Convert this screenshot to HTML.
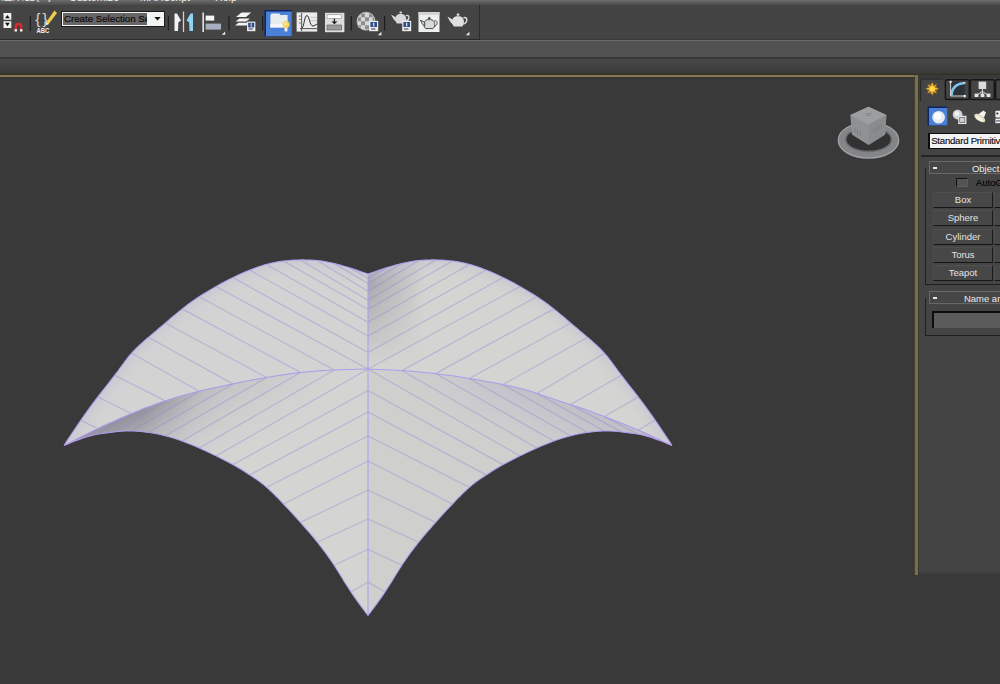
<!DOCTYPE html>
<html lang="en">
<head>
<meta charset="utf-8">
<title>3ds Max viewport</title>
<style>
html,body{margin:0;padding:0;}
body{width:1000px;height:684px;overflow:hidden;background:#393939;position:relative;font-family:"Liberation Sans","Noto Sans CJK SC",sans-serif;font-size:9.5px;color:#e0e0e0;}
.abs{position:absolute;}
#topstrip{left:0;top:0;width:1000px;height:6px;background:linear-gradient(#6e6e6e,#585858 50%,#444 100%);}
#tbrow{left:0;top:6px;width:1000px;height:33px;background:#434343;}
#toolbar{left:0;top:5px;width:479px;height:34px;background:#444;border-right:1.5px solid #2c2c2c;border-bottom:1.5px solid #2a2a2a;box-sizing:content-box;}
#band1{left:0;top:40px;width:1000px;height:18px;background:#515151;border-top:1px solid #686868;box-sizing:border-box;}
#band2{left:0;top:57px;width:1000px;height:18px;background:linear-gradient(#363636 0,#363636 8%,#484848 12%,#3c3c3c 85%,#33301f 100%);}
#yh{left:0;top:75.2px;width:918px;height:2.3px;background:#84764e;}
#yhs{left:0;top:77.5px;width:916px;height:1.5px;background:#36332d;}
#yv{left:915.4px;top:75px;width:2.6px;height:500px;background:#7c6f46;box-shadow:-0.6px 0 0 #4a4430;}
#menu{left:0;top:-9.3px;height:12px;line-height:12px;font-size:10.6px;color:#f2f2f2;white-space:nowrap;letter-spacing:0;}
#menu span{position:absolute;top:0;}
#panel{left:919px;top:78px;width:81px;height:495px;background:#444444;overflow:hidden;}
#panelfade{left:919px;top:571px;width:81px;height:4px;background:linear-gradient(#444,#393939);}
.btn{position:absolute;left:14px;width:60px;height:16px;box-sizing:border-box;background:#474747;border-top:1px solid #505050;border-left:1px solid #4c4c4c;border-right:1.5px solid #1c1c1c;border-bottom:1.5px solid #161616;text-align:center;line-height:14.3px;font-size:9.5px;color:#e4e4e4;}
.roll{position:absolute;left:9.5px;width:80px;height:13px;box-sizing:border-box;border:1px solid #686868;background:#464646;font-size:9.5px;line-height:11px;color:#ececec;white-space:nowrap;}
.roll i{position:absolute;left:3px;top:5px;width:4.5px;height:1.5px;background:#e8e8e8;}
.frame{position:absolute;left:6px;width:90px;box-sizing:border-box;border-left:1.5px solid #1e1e1e;border-bottom:1.5px solid #1e1e1e;}
</style>
</head>
<body>
<div class="abs" id="tbrow"></div>
<div class="abs" id="topstrip"></div>
<div class="abs" id="toolbar"></div>
<div class="abs" id="menu"><span style="left:1px;font-size:11.5px;top:-1px">渲染器(R)</span><span style="left:69px">Customize</span><span style="left:140px">MAXScript</span><span style="left:215px">Help</span></div>
<div class="abs" id="band1"></div>
<div class="abs" id="band2"></div>
<div class="abs" id="yh"></div>
<div class="abs" id="yhs"></div>
<div class="abs" id="yv"></div>
<div class="abs" style="left:60.5px;top:10.5px;width:104px;height:16.5px;background:#1a1a1a;"></div>
<div class="abs" style="left:62px;top:11.5px;width:101.5px;height:14.5px;background:#f4f4f4;"></div>
<div class="abs" style="left:63px;top:13px;width:84px;height:11.5px;background:#666666;overflow:hidden;white-space:nowrap;font-size:9.7px;line-height:12.3px;color:#0c0c0c;-webkit-text-stroke:0.2px #0c0c0c;"><span style="margin-left:1px">Create Selection Se</span></div>
<svg class="abs" width="1000" height="45" viewBox="0 0 1000 45" style="left:0;top:0">
<!-- combo arrow -->
<path d="M154.3 17 L160.7 17 L157.5 20.6Z" fill="#111"/>
<!-- spinner -->
<rect x="3.5" y="13" width="7.8" height="6.8" fill="#f0f0f0"/>
<rect x="3.5" y="21.2" width="7.8" height="6.8" fill="#f0f0f0"/>
<path d="M5 18.2 L9.8 18.2 L7.4 15Z" fill="#111"/>
<path d="M5 22.8 L9.8 22.8 L7.4 26.2Z" fill="#111"/>
<!-- magnet -->
<path d="M15.8 31 L15.8 26.5 A2.7 2.7 0 0 1 21.2 26.5 L21.2 31" fill="none" stroke="#e0262c" stroke-width="2.3"/>
<rect x="14.6" y="29.2" width="2.4" height="2.3" fill="#f4f4f4"/>
<rect x="20" y="29.2" width="2.4" height="2.3" fill="#f4f4f4"/>
<!-- separators -->
<g stroke="#1d1d1d" stroke-width="1.2">
<path d="M30.3 16 V31"/><path d="M168.4 16 V30.5"/><path d="M229 16 V30.5"/><path d="M262.6 16 V30.5"/><path d="M351.3 16 V30.5"/><path d="M384.6 16 V30.5"/>
</g>
<!-- braces + pencil + ABC -->
<text x="35.2" y="23.8" font-family="Liberation Sans, sans-serif" font-size="15.5" fill="#d6d6d6">{</text><text x="42.4" y="23.8" font-family="Liberation Sans, sans-serif" font-size="15.5" fill="#d6d6d6">}</text>
<path d="M54.4 10.6 L57 13 L48.6 24.2 L46 25 L46.2 22.2Z" fill="#f1cb4c"/>
<path d="M48.8 24 L46 25 L46.2 22.2Z" fill="#f4f4f4"/>
<text x="36.6" y="32.6" font-family="Liberation Sans, sans-serif" font-size="6.4" font-weight="bold" fill="#f2f2f2" textLength="12.8" lengthAdjust="spacingAndGlyphs">ABC</text>
<!-- mirror -->
<path d="M174.5 13.4 L177 13.4 L181 20.6 L178.4 22.3 L178 31 L174.5 31Z" fill="#f3f3f6"/>
<path d="M183.5 11.5 V32" stroke="#d8d2c4" stroke-width="1.3"/>
<path d="M193 13.4 L190.5 13.4 L186.5 20.6 L189.1 22.3 L189.5 31 L193 31Z" fill="#8fd3f0"/>
<!-- align -->
<path d="M203.2 12.5 V32" stroke="#e4e4e4" stroke-width="1.6"/>
<rect x="205.6" y="15.6" width="8.6" height="5" fill="#f4f4f4"/>
<rect x="205.6" y="23.6" width="15.4" height="6" fill="#a9aec0"/>
<path d="M225.2 31.4 L225.2 34.8 L221.8 34.8Z" fill="#f4f4f4"/>
<!-- layers -->
<path d="M241.5 12.6 L251.2 12.6 L246 17 L236 17Z" fill="#f4f4f4"/>
<path d="M239.5 18.4 L250 18.4 L246 21.4 L235.5 21.4Z" fill="#f4f4f4"/>
<path d="M238.5 22.8 L248 22.8 L246.5 25.6 L235 25.6Z" fill="#f4f4f4"/>
<rect x="247" y="21.6" width="8.4" height="9.6" fill="#e8e8ee"/>
<rect x="248.2" y="22.8" width="6" height="4.6" fill="#2a4c86"/>
<rect x="250.6" y="23.2" width="1.2" height="3.6" fill="#c8d4ea"/>
<rect x="248.6" y="28.4" width="4" height="1.2" fill="#556"/>
<!-- active blue button -->
<rect x="264.5" y="10" width="27.3" height="26.2" fill="#0d2466"/>
<rect x="266" y="11.5" width="25.8" height="24.7" fill="#4b80d8"/>
<path d="M270.4 15 L271.6 13.6 L279.4 13.6 L280.2 15 L287.6 15 L287.6 27.4 L270.4 27.4Z" fill="#e9ecec"/>
<path d="M270.4 24 H287.6 V27.4 H270.4Z" fill="#f8f8f8"/>
<rect x="284.6" y="28" width="2.8" height="3.4" fill="#f2f2f2"/>
<circle cx="286" cy="24.6" r="3.5" fill="#f6d660"/>
<circle cx="285.4" cy="24" r="1.6" fill="#fbe88f"/>
<!-- curve editor -->
<rect x="296.6" y="12.4" width="20.6" height="19.2" fill="#ebebeb"/>
<path d="M301.6 13 V31 M300 28.6 H317" stroke="#444" stroke-width="0.9" fill="none"/>
<path d="M299 16 h1.6 M299 19.5 h1.6 M299 23 h1.6" stroke="#444" stroke-width="0.8"/>
<path d="M302 28 C304 27 304.5 15.5 306.8 15.5 C309.4 15.5 309.6 26 313 26 C314.6 26 315.6 24.6 317 24" stroke="#2a2a2a" stroke-width="1" fill="none"/>
<path d="M310 17.4 H317 M310 20.6 H317" stroke="#bbb" stroke-width="0.7"/>
<!-- dope sheet -->
<rect x="325" y="12.8" width="19.4" height="19.4" fill="#dedede"/>
<rect x="327" y="14.8" width="14.6" height="3.6" fill="#fdfdfd" stroke="#777" stroke-width="0.5"/>
<path d="M334.4 18.6 V22" stroke="#222" stroke-width="1.3"/>
<path d="M331.4 21.4 H337.4 L334.4 24.2Z" fill="#1c1c1c"/>
<rect x="327" y="25" width="14.6" height="5" fill="#9a9a9a" stroke="#555" stroke-width="0.6"/>
<!-- material editor -->
<circle cx="366" cy="21.2" r="9" fill="#d8d8d8"/>
<g fill="#8e8e8e"><path d="M361 13.6 h4 v3.6 h-4z M369 13.8 h3.6 v3.4 h-3.6z M357.6 17.2 h3.4 v4 h-3.4z M365 17.2 h4 v4 h-4z M361 21.2 h4 v4 h-4z M357.8 25.2 h3.2 v2.6 h-3.2z M365 25.2 h4 v4.4 h-4z M372.6 17.2 h2 v4 h-2z"/></g>
<circle cx="366" cy="21.2" r="9" fill="none" stroke="#bdbdbd" stroke-width="0.8"/>
<rect x="369.2" y="20.8" width="9" height="10.4" fill="#ececf0"/>
<rect x="370.4" y="22" width="6.6" height="5" fill="#2b4f88"/>
<rect x="373" y="22.6" width="1.3" height="3.8" fill="#cfd9ec"/>
<rect x="371" y="28.4" width="4.4" height="1.2" fill="#556"/>
<path d="M381.4 31.8 L381.4 35.2 L378 35.2Z" fill="#f4f4f4"/>
<!-- render setup teapot -->
<g fill="#d9d9dc">
<path d="M396.6 15.6 C396.6 13.4 404.8 13.4 404.8 15.6 C406.8 17.6 406.6 21.6 404.6 23.4 L397 23.4 C395 21.6 394.6 17.6 396.6 15.6Z"/>
<path d="M391 14.4 L395.8 17.2 L396.2 21.6 C393.8 20.6 392.8 17.4 391 14.4Z"/>
<rect x="399.4" y="11.6" width="2.6" height="2" rx="0.8"/>
</g>
<path d="M405.8 15.6 C410 14 410 20 405.6 21.4" fill="none" stroke="#d9d9dc" stroke-width="1.3"/>
<rect x="402.2" y="20.8" width="9" height="10.4" fill="#ececf0"/>
<rect x="403.4" y="22" width="6.6" height="5" fill="#2b4f88"/>
<rect x="406" y="22.6" width="1.3" height="3.8" fill="#cfd9ec"/>
<rect x="404" y="28.4" width="4.4" height="1.2" fill="#556"/>
<!-- rendered frame window -->
<rect x="418.5" y="12" width="21" height="20" fill="#eef0f0"/>
<rect x="418.5" y="12" width="21" height="3" fill="#d4d4d4"/>
<g fill="#d8d9da" stroke="#3a3a3a" stroke-width="0.9">
<path d="M425.4 20.8 C425.4 19.2 433.2 19.2 433.2 20.8 C435.4 22.6 435.2 26.6 433 28.6 L425.6 28.6 C423.4 26.6 423.2 22.6 425.4 20.8Z"/>
<path d="M420.4 20.2 L424.6 22.2 L424.8 26.2 C422.4 25.2 421.8 22.6 420.4 20.2Z"/>
</g>
<path d="M434.2 21 C438.2 19.6 438.2 25.4 434 26.6" fill="none" stroke="#3a3a3a" stroke-width="0.9"/>
<rect x="428" y="17.2" width="2.6" height="1.8" rx="0.8" fill="#333"/>
<!-- render teapot -->
<g fill="#e0e0e3">
<path d="M453.6 17.8 C453.6 15.6 462.4 15.6 462.4 17.8 C464.6 19.8 464.4 24.4 462.2 26.6 L454 26.6 C451.8 24.4 451.4 19.8 453.6 17.8Z"/>
<path d="M447.4 16.6 L452.6 19.4 L453 24.4 C450.4 23.2 449.4 19.8 447.4 16.6Z"/>
<rect x="456.6" y="13.6" width="2.8" height="2.2" rx="0.8"/>
</g>
<path d="M463.4 17.8 C468 16 468 22.6 463.2 24.2" fill="none" stroke="#e0e0e3" stroke-width="1.4"/>
<path d="M469.4 31.8 L469.4 35.2 L466 35.2Z" fill="#f4f4f4"/>
</svg>


<svg id="vault" width="1000" height="684" viewBox="0 0 1000 684" style="position:absolute;left:0;top:0">
<defs>
<linearGradient id="gfl" gradientUnits="userSpaceOnUse" x1="170" y1="398" x2="200" y2="468">
<stop offset="0" stop-color="#94929c"/><stop offset="0.3" stop-color="#afaeb5"/><stop offset="0.65" stop-color="#c7c6ca"/><stop offset="1" stop-color="#d4d4d3"/>
</linearGradient>
<linearGradient id="gfr" gradientUnits="userSpaceOnUse" x1="566" y1="398" x2="542" y2="454">
<stop offset="0" stop-color="#c0bec6"/><stop offset="0.5" stop-color="#c9c8cd"/><stop offset="1" stop-color="#cfcfce"/>
</linearGradient>
<linearGradient id="gbr" gradientUnits="userSpaceOnUse" x1="368" y1="0" x2="425" y2="0">
<stop offset="0" stop-color="#a9a8ae"/><stop offset="1" stop-color="#d4d4d2"/>
</linearGradient>
<linearGradient id="gfade_l" gradientUnits="userSpaceOnUse" x1="142" y1="0" x2="342" y2="0">
<stop offset="0" stop-color="#d4d4d3" stop-opacity="0"/><stop offset="0.14" stop-color="#d4d4d3" stop-opacity="0.25"/><stop offset="0.28" stop-color="#d4d4d3" stop-opacity="0.55"/><stop offset="0.42" stop-color="#d4d4d3" stop-opacity="0.7"/><stop offset="0.8" stop-color="#d4d4d3" stop-opacity="0.85"/><stop offset="1" stop-color="#d4d4d3" stop-opacity="1"/>
</linearGradient>
<linearGradient id="gfade_r" gradientUnits="userSpaceOnUse" x1="486" y1="0" x2="386" y2="0">
<stop offset="0" stop-color="#cfcfce" stop-opacity="0"/><stop offset="1" stop-color="#cfcfce" stop-opacity="1"/>
</linearGradient>
<linearGradient id="gfade_br" gradientUnits="userSpaceOnUse" x1="0" y1="285" x2="0" y2="365">
<stop offset="0" stop-color="#d4d4d2" stop-opacity="0"/><stop offset="1" stop-color="#d4d4d2" stop-opacity="1"/>
</linearGradient>
<filter id="rim" x="-5%" y="-5%" width="110%" height="110%"><feGaussianBlur stdDeviation="5"/></filter>
<filter id="lb" x="-5%" y="-5%" width="110%" height="110%"><feGaussianBlur stdDeviation="0.5"/></filter>
<clipPath id="cbl"><path d="M64.0 445.5 L67.8 439.6 L71.7 433.8 L75.5 428.1 L79.4 422.4 L83.2 416.8 L87.1 411.4 L90.9 406.1 L94.8 400.9 L98.6 395.9 L102.5 390.9 L106.3 386.1 L110.2 381.1 L114.0 376.1 L117.9 371.0 L121.7 365.7 L125.6 360.5 L129.4 355.7 L133.3 351.3 L137.1 347.4 L141.0 343.8 L144.8 340.4 L148.7 337.1 L152.5 333.9 L156.4 330.6 L160.2 327.3 L164.1 324.1 L167.9 320.8 L171.7 317.5 L175.6 314.3 L179.4 311.2 L183.3 308.1 L187.1 305.1 L191.0 302.3 L194.8 299.6 L198.7 297.0 L202.5 294.5 L206.4 292.2 L210.2 289.9 L214.1 287.6 L217.9 285.4 L221.8 283.3 L225.6 281.3 L229.5 279.3 L233.3 277.4 L237.2 275.5 L241.0 273.8 L244.9 272.1 L248.7 270.5 L252.6 269.0 L256.4 267.6 L260.3 266.3 L264.1 265.1 L267.9 264.0 L271.8 263.1 L275.6 262.3 L279.5 261.6 L283.3 261.1 L287.2 260.7 L291.0 260.3 L294.9 260.1 L298.7 259.9 L302.6 259.8 L306.4 259.9 L310.3 260.0 L314.1 260.3 L318.0 260.6 L321.8 261.1 L325.7 261.7 L329.5 262.4 L333.4 263.2 L337.2 264.2 L341.1 265.3 L344.9 266.4 L348.8 267.6 L352.6 268.8 L356.5 270.1 L360.3 271.4 L364.2 272.7 L368.0 274.0 L368.0 369.0 L368.0 369.0 L362.8 369.1 L357.7 369.2 L352.5 369.4 L347.4 369.5 L342.2 369.7 L337.1 369.9 L331.9 370.1 L326.8 370.4 L321.6 370.7 L316.5 371.0 L311.3 371.4 L306.2 371.9 L301.0 372.4 L295.9 373.0 L290.7 373.7 L285.6 374.4 L280.4 375.2 L275.3 376.1 L270.1 376.9 L264.9 377.8 L259.8 378.7 L254.6 379.6 L249.5 380.6 L244.3 381.6 L239.2 382.6 L234.0 383.7 L228.9 384.7 L223.7 385.8 L218.6 386.9 L213.4 388.0 L208.3 389.1 L203.1 390.3 L198.0 391.5 L192.8 392.8 L187.7 394.2 L182.5 395.6 L177.4 397.1 L172.2 398.7 L167.1 400.3 L161.9 402.0 L156.7 403.8 L151.6 405.7 L146.4 407.6 L141.3 409.6 L136.1 411.7 L131.0 413.8 L125.8 415.9 L120.7 418.1 L115.5 420.4 L110.4 422.7 L105.2 425.1 L100.1 427.5 L94.9 429.9 L89.8 432.5 L84.6 435.0 L79.5 437.6 L74.3 440.2 L69.2 442.9 L64.0 445.5Z"/></clipPath>
<clipPath id="cbr"><path d="M672.0 445.5 L668.2 439.6 L664.3 433.8 L660.5 428.1 L656.6 422.4 L652.8 416.8 L648.9 411.4 L645.1 406.1 L641.2 400.9 L637.4 395.9 L633.5 390.9 L629.7 386.1 L625.8 381.1 L622.0 376.1 L618.1 371.0 L614.3 365.7 L610.4 360.5 L606.6 355.7 L602.7 351.3 L598.9 347.4 L595.0 343.8 L591.2 340.4 L587.3 337.1 L583.5 333.9 L579.6 330.6 L575.8 327.3 L571.9 324.1 L568.1 320.8 L564.3 317.5 L560.4 314.3 L556.6 311.2 L552.7 308.1 L548.9 305.1 L545.0 302.3 L541.2 299.6 L537.3 297.0 L533.5 294.5 L529.6 292.2 L525.8 289.9 L521.9 287.6 L518.1 285.4 L514.2 283.3 L510.4 281.3 L506.5 279.3 L502.7 277.4 L498.8 275.5 L495.0 273.8 L491.1 272.1 L487.3 270.5 L483.4 269.0 L479.6 267.6 L475.7 266.3 L471.9 265.1 L468.1 264.0 L464.2 263.1 L460.4 262.3 L456.5 261.6 L452.7 261.1 L448.8 260.7 L445.0 260.3 L441.1 260.1 L437.3 259.9 L433.4 259.8 L429.6 259.9 L425.7 260.0 L421.9 260.3 L418.0 260.6 L414.2 261.1 L410.3 261.7 L406.5 262.4 L402.6 263.2 L398.8 264.2 L394.9 265.3 L391.1 266.4 L387.2 267.6 L383.4 268.8 L379.5 270.1 L375.7 271.4 L371.8 272.7 L368.0 274.0 L368.0 369.0 L368.0 369.0 L373.2 369.2 L378.3 369.4 L383.5 369.6 L388.6 369.9 L393.8 370.1 L398.9 370.4 L404.1 370.8 L409.2 371.1 L414.4 371.5 L419.5 372.0 L424.7 372.4 L429.8 373.0 L435.0 373.6 L440.1 374.2 L445.3 374.9 L450.4 375.6 L455.6 376.3 L460.7 377.1 L465.9 377.9 L471.1 378.7 L476.2 379.6 L481.4 380.5 L486.5 381.4 L491.7 382.3 L496.8 383.3 L502.0 384.3 L507.1 385.4 L512.3 386.5 L517.4 387.8 L522.6 389.1 L527.7 390.5 L532.9 392.1 L538.0 393.7 L543.2 395.5 L548.3 397.2 L553.5 399.0 L558.6 400.7 L563.8 402.4 L568.9 404.1 L574.1 405.7 L579.3 407.4 L584.4 409.1 L589.6 411.0 L594.7 412.9 L599.9 414.9 L605.0 416.8 L610.2 418.8 L615.3 420.8 L620.5 422.8 L625.6 424.8 L630.8 426.9 L635.9 429.0 L641.1 431.2 L646.2 433.5 L651.4 435.8 L656.5 438.2 L661.7 440.6 L666.8 443.1 L672.0 445.5Z"/></clipPath>
</defs>
<path d="M64.0 445.5 L67.8 439.6 L71.7 433.8 L75.5 428.1 L79.4 422.4 L83.2 416.8 L87.1 411.4 L90.9 406.1 L94.8 400.9 L98.6 395.9 L102.5 390.9 L106.3 386.1 L110.2 381.1 L114.0 376.1 L117.9 371.0 L121.7 365.7 L125.6 360.5 L129.4 355.7 L133.3 351.3 L137.1 347.4 L141.0 343.8 L144.8 340.4 L148.7 337.1 L152.5 333.9 L156.4 330.6 L160.2 327.3 L164.1 324.1 L167.9 320.8 L171.7 317.5 L175.6 314.3 L179.4 311.2 L183.3 308.1 L187.1 305.1 L191.0 302.3 L194.8 299.6 L198.7 297.0 L202.5 294.5 L206.4 292.2 L210.2 289.9 L214.1 287.6 L217.9 285.4 L221.8 283.3 L225.6 281.3 L229.5 279.3 L233.3 277.4 L237.2 275.5 L241.0 273.8 L244.9 272.1 L248.7 270.5 L252.6 269.0 L256.4 267.6 L260.3 266.3 L264.1 265.1 L267.9 264.0 L271.8 263.1 L275.6 262.3 L279.5 261.6 L283.3 261.1 L287.2 260.7 L291.0 260.3 L294.9 260.1 L298.7 259.9 L302.6 259.8 L306.4 259.9 L310.3 260.0 L314.1 260.3 L318.0 260.6 L321.8 261.1 L325.7 261.7 L329.5 262.4 L333.4 263.2 L337.2 264.2 L341.1 265.3 L344.9 266.4 L348.8 267.6 L352.6 268.8 L356.5 270.1 L360.3 271.4 L364.2 272.7 L368.0 274.0 L368.0 369.0 L368.0 369.0 L362.8 369.1 L357.7 369.2 L352.5 369.4 L347.4 369.5 L342.2 369.7 L337.1 369.9 L331.9 370.1 L326.8 370.4 L321.6 370.7 L316.5 371.0 L311.3 371.4 L306.2 371.9 L301.0 372.4 L295.9 373.0 L290.7 373.7 L285.6 374.4 L280.4 375.2 L275.3 376.1 L270.1 376.9 L264.9 377.8 L259.8 378.7 L254.6 379.6 L249.5 380.6 L244.3 381.6 L239.2 382.6 L234.0 383.7 L228.9 384.7 L223.7 385.8 L218.6 386.9 L213.4 388.0 L208.3 389.1 L203.1 390.3 L198.0 391.5 L192.8 392.8 L187.7 394.2 L182.5 395.6 L177.4 397.1 L172.2 398.7 L167.1 400.3 L161.9 402.0 L156.7 403.8 L151.6 405.7 L146.4 407.6 L141.3 409.6 L136.1 411.7 L131.0 413.8 L125.8 415.9 L120.7 418.1 L115.5 420.4 L110.4 422.7 L105.2 425.1 L100.1 427.5 L94.9 429.9 L89.8 432.5 L84.6 435.0 L79.5 437.6 L74.3 440.2 L69.2 442.9 L64.0 445.5Z" fill="#d3d3d4"/>
<path d="M672.0 445.5 L668.2 439.6 L664.3 433.8 L660.5 428.1 L656.6 422.4 L652.8 416.8 L648.9 411.4 L645.1 406.1 L641.2 400.9 L637.4 395.9 L633.5 390.9 L629.7 386.1 L625.8 381.1 L622.0 376.1 L618.1 371.0 L614.3 365.7 L610.4 360.5 L606.6 355.7 L602.7 351.3 L598.9 347.4 L595.0 343.8 L591.2 340.4 L587.3 337.1 L583.5 333.9 L579.6 330.6 L575.8 327.3 L571.9 324.1 L568.1 320.8 L564.3 317.5 L560.4 314.3 L556.6 311.2 L552.7 308.1 L548.9 305.1 L545.0 302.3 L541.2 299.6 L537.3 297.0 L533.5 294.5 L529.6 292.2 L525.8 289.9 L521.9 287.6 L518.1 285.4 L514.2 283.3 L510.4 281.3 L506.5 279.3 L502.7 277.4 L498.8 275.5 L495.0 273.8 L491.1 272.1 L487.3 270.5 L483.4 269.0 L479.6 267.6 L475.7 266.3 L471.9 265.1 L468.1 264.0 L464.2 263.1 L460.4 262.3 L456.5 261.6 L452.7 261.1 L448.8 260.7 L445.0 260.3 L441.1 260.1 L437.3 259.9 L433.4 259.8 L429.6 259.9 L425.7 260.0 L421.9 260.3 L418.0 260.6 L414.2 261.1 L410.3 261.7 L406.5 262.4 L402.6 263.2 L398.8 264.2 L394.9 265.3 L391.1 266.4 L387.2 267.6 L383.4 268.8 L379.5 270.1 L375.7 271.4 L371.8 272.7 L368.0 274.0 L368.0 369.0 L368.0 369.0 L373.2 369.2 L378.3 369.4 L383.5 369.6 L388.6 369.9 L393.8 370.1 L398.9 370.4 L404.1 370.8 L409.2 371.1 L414.4 371.5 L419.5 372.0 L424.7 372.4 L429.8 373.0 L435.0 373.6 L440.1 374.2 L445.3 374.9 L450.4 375.6 L455.6 376.3 L460.7 377.1 L465.9 377.9 L471.1 378.7 L476.2 379.6 L481.4 380.5 L486.5 381.4 L491.7 382.3 L496.8 383.3 L502.0 384.3 L507.1 385.4 L512.3 386.5 L517.4 387.8 L522.6 389.1 L527.7 390.5 L532.9 392.1 L538.0 393.7 L543.2 395.5 L548.3 397.2 L553.5 399.0 L558.6 400.7 L563.8 402.4 L568.9 404.1 L574.1 405.7 L579.3 407.4 L584.4 409.1 L589.6 411.0 L594.7 412.9 L599.9 414.9 L605.0 416.8 L610.2 418.8 L615.3 420.8 L620.5 422.8 L625.6 424.8 L630.8 426.9 L635.9 429.0 L641.1 431.2 L646.2 433.5 L651.4 435.8 L656.5 438.2 L661.7 440.6 L666.8 443.1 L672.0 445.5Z" fill="url(#gbr)"/>
<path d="M672.0 445.5 L668.2 439.6 L664.3 433.8 L660.5 428.1 L656.6 422.4 L652.8 416.8 L648.9 411.4 L645.1 406.1 L641.2 400.9 L637.4 395.9 L633.5 390.9 L629.7 386.1 L625.8 381.1 L622.0 376.1 L618.1 371.0 L614.3 365.7 L610.4 360.5 L606.6 355.7 L602.7 351.3 L598.9 347.4 L595.0 343.8 L591.2 340.4 L587.3 337.1 L583.5 333.9 L579.6 330.6 L575.8 327.3 L571.9 324.1 L568.1 320.8 L564.3 317.5 L560.4 314.3 L556.6 311.2 L552.7 308.1 L548.9 305.1 L545.0 302.3 L541.2 299.6 L537.3 297.0 L533.5 294.5 L529.6 292.2 L525.8 289.9 L521.9 287.6 L518.1 285.4 L514.2 283.3 L510.4 281.3 L506.5 279.3 L502.7 277.4 L498.8 275.5 L495.0 273.8 L491.1 272.1 L487.3 270.5 L483.4 269.0 L479.6 267.6 L475.7 266.3 L471.9 265.1 L468.1 264.0 L464.2 263.1 L460.4 262.3 L456.5 261.6 L452.7 261.1 L448.8 260.7 L445.0 260.3 L441.1 260.1 L437.3 259.9 L433.4 259.8 L429.6 259.9 L425.7 260.0 L421.9 260.3 L418.0 260.6 L414.2 261.1 L410.3 261.7 L406.5 262.4 L402.6 263.2 L398.8 264.2 L394.9 265.3 L391.1 266.4 L387.2 267.6 L383.4 268.8 L379.5 270.1 L375.7 271.4 L371.8 272.7 L368.0 274.0 L368.0 369.0 L368.0 369.0 L373.2 369.2 L378.3 369.4 L383.5 369.6 L388.6 369.9 L393.8 370.1 L398.9 370.4 L404.1 370.8 L409.2 371.1 L414.4 371.5 L419.5 372.0 L424.7 372.4 L429.8 373.0 L435.0 373.6 L440.1 374.2 L445.3 374.9 L450.4 375.6 L455.6 376.3 L460.7 377.1 L465.9 377.9 L471.1 378.7 L476.2 379.6 L481.4 380.5 L486.5 381.4 L491.7 382.3 L496.8 383.3 L502.0 384.3 L507.1 385.4 L512.3 386.5 L517.4 387.8 L522.6 389.1 L527.7 390.5 L532.9 392.1 L538.0 393.7 L543.2 395.5 L548.3 397.2 L553.5 399.0 L558.6 400.7 L563.8 402.4 L568.9 404.1 L574.1 405.7 L579.3 407.4 L584.4 409.1 L589.6 411.0 L594.7 412.9 L599.9 414.9 L605.0 416.8 L610.2 418.8 L615.3 420.8 L620.5 422.8 L625.6 424.8 L630.8 426.9 L635.9 429.0 L641.1 431.2 L646.2 433.5 L651.4 435.8 L656.5 438.2 L661.7 440.6 L666.8 443.1 L672.0 445.5Z" fill="url(#gfade_br)"/>
<g clip-path="url(#cbl)"><path d="M64.0 445.5 L67.8 439.6 L71.7 433.8 L75.5 428.1 L79.4 422.4 L83.2 416.8 L87.1 411.4 L90.9 406.1 L94.8 400.9 L98.6 395.9 L102.5 390.9 L106.3 386.1 L110.2 381.1 L114.0 376.1 L117.9 371.0 L121.7 365.7 L125.6 360.5 L129.4 355.7 L133.3 351.3 L137.1 347.4 L141.0 343.8 L144.8 340.4 L148.7 337.1 L152.5 333.9 L156.4 330.6 L160.2 327.3 L164.1 324.1 L167.9 320.8 L171.7 317.5 L175.6 314.3 L179.4 311.2 L183.3 308.1 L187.1 305.1 L191.0 302.3 L194.8 299.6 L198.7 297.0 L202.5 294.5 L206.4 292.2 L210.2 289.9 L214.1 287.6 L217.9 285.4 L221.8 283.3 L225.6 281.3 L229.5 279.3 L233.3 277.4 L237.2 275.5 L241.0 273.8 L244.9 272.1 L248.7 270.5 L252.6 269.0 L256.4 267.6 L260.3 266.3 L264.1 265.1 L267.9 264.0 L271.8 263.1 L275.6 262.3 L279.5 261.6 L283.3 261.1 L287.2 260.7 L291.0 260.3 L294.9 260.1 L298.7 259.9 L302.6 259.8 L306.4 259.9 L310.3 260.0 L314.1 260.3 L318.0 260.6 L321.8 261.1 L325.7 261.7 L329.5 262.4 L333.4 263.2 L337.2 264.2 L341.1 265.3 L344.9 266.4 L348.8 267.6 L352.6 268.8 L356.5 270.1 L360.3 271.4 L364.2 272.7 L368.0 274.0" fill="none" stroke="#c4c1d0" stroke-width="10" filter="url(#rim)" opacity="0.6"/></g>
<g clip-path="url(#cbr)"><path d="M672.0 445.5 L668.2 439.6 L664.3 433.8 L660.5 428.1 L656.6 422.4 L652.8 416.8 L648.9 411.4 L645.1 406.1 L641.2 400.9 L637.4 395.9 L633.5 390.9 L629.7 386.1 L625.8 381.1 L622.0 376.1 L618.1 371.0 L614.3 365.7 L610.4 360.5 L606.6 355.7 L602.7 351.3 L598.9 347.4 L595.0 343.8 L591.2 340.4 L587.3 337.1 L583.5 333.9 L579.6 330.6 L575.8 327.3 L571.9 324.1 L568.1 320.8 L564.3 317.5 L560.4 314.3 L556.6 311.2 L552.7 308.1 L548.9 305.1 L545.0 302.3 L541.2 299.6 L537.3 297.0 L533.5 294.5 L529.6 292.2 L525.8 289.9 L521.9 287.6 L518.1 285.4 L514.2 283.3 L510.4 281.3 L506.5 279.3 L502.7 277.4 L498.8 275.5 L495.0 273.8 L491.1 272.1 L487.3 270.5 L483.4 269.0 L479.6 267.6 L475.7 266.3 L471.9 265.1 L468.1 264.0 L464.2 263.1 L460.4 262.3 L456.5 261.6 L452.7 261.1 L448.8 260.7 L445.0 260.3 L441.1 260.1 L437.3 259.9 L433.4 259.8 L429.6 259.9 L425.7 260.0 L421.9 260.3 L418.0 260.6 L414.2 261.1 L410.3 261.7 L406.5 262.4 L402.6 263.2 L398.8 264.2 L394.9 265.3 L391.1 266.4 L387.2 267.6 L383.4 268.8 L379.5 270.1 L375.7 271.4 L371.8 272.7 L368.0 274.0" fill="none" stroke="#c4c1d0" stroke-width="10" filter="url(#rim)" opacity="0.6"/></g>
<path d="M64.0 445.5 L69.2 442.9 L74.3 440.2 L79.5 437.6 L84.6 435.0 L89.8 432.5 L94.9 429.9 L100.1 427.5 L105.2 425.1 L110.4 422.7 L115.5 420.4 L120.7 418.1 L125.8 415.9 L131.0 413.8 L136.1 411.7 L141.3 409.6 L146.4 407.6 L151.6 405.7 L156.7 403.8 L161.9 402.0 L167.1 400.3 L172.2 398.7 L177.4 397.1 L182.5 395.6 L187.7 394.2 L192.8 392.8 L198.0 391.5 L203.1 390.3 L208.3 389.1 L213.4 388.0 L218.6 386.9 L223.7 385.8 L228.9 384.7 L234.0 383.7 L239.2 382.6 L244.3 381.6 L249.5 380.6 L254.6 379.6 L259.8 378.7 L264.9 377.8 L270.1 376.9 L275.3 376.1 L280.4 375.2 L285.6 374.4 L290.7 373.7 L295.9 373.0 L301.0 372.4 L306.2 371.9 L311.3 371.4 L316.5 371.0 L321.6 370.7 L326.8 370.4 L331.9 370.1 L337.1 369.9 L342.2 369.7 L347.4 369.5 L352.5 369.4 L357.7 369.2 L362.8 369.1 L368.0 369.0 L368.0 615.5 L368.0 615.5 L364.2 610.4 L360.3 605.2 L356.5 599.9 L352.6 594.4 L348.8 588.5 L344.9 582.4 L341.1 576.2 L337.2 570.0 L333.4 564.0 L329.5 558.4 L325.7 553.0 L321.8 547.9 L318.0 543.0 L314.1 538.2 L310.3 533.6 L306.4 529.2 L302.6 524.8 L298.7 520.5 L294.9 516.2 L291.0 512.0 L287.2 507.9 L283.3 503.8 L279.5 499.7 L275.6 495.8 L271.8 492.0 L267.9 488.4 L264.1 485.1 L260.3 482.1 L256.4 479.3 L252.6 476.7 L248.7 474.2 L244.9 471.7 L241.0 469.3 L237.2 467.0 L233.3 464.8 L229.5 462.7 L225.6 460.7 L221.8 458.7 L217.9 456.8 L214.1 454.9 L210.2 453.1 L206.4 451.3 L202.5 449.5 L198.7 447.7 L194.8 446.0 L191.0 444.4 L187.1 442.9 L183.3 441.4 L179.4 440.0 L175.6 438.7 L171.7 437.5 L167.9 436.4 L164.1 435.4 L160.2 434.5 L156.4 433.7 L152.5 433.0 L148.7 432.4 L144.8 431.9 L141.0 431.5 L137.1 431.2 L133.3 431.0 L129.4 431.0 L125.6 431.1 L121.7 431.3 L117.9 431.6 L114.0 431.9 L110.2 432.4 L106.3 432.9 L102.5 433.4 L98.6 434.1 L94.8 434.8 L90.9 435.8 L87.1 436.8 L83.2 438.0 L79.4 439.4 L75.5 440.8 L71.7 442.3 L67.8 443.9 L64.0 445.5Z" fill="url(#gfl)"/>
<path d="M64.0 445.5 L69.2 442.9 L74.3 440.2 L79.5 437.6 L84.6 435.0 L89.8 432.5 L94.9 429.9 L100.1 427.5 L105.2 425.1 L110.4 422.7 L115.5 420.4 L120.7 418.1 L125.8 415.9 L131.0 413.8 L136.1 411.7 L141.3 409.6 L146.4 407.6 L151.6 405.7 L156.7 403.8 L161.9 402.0 L167.1 400.3 L172.2 398.7 L177.4 397.1 L182.5 395.6 L187.7 394.2 L192.8 392.8 L198.0 391.5 L203.1 390.3 L208.3 389.1 L213.4 388.0 L218.6 386.9 L223.7 385.8 L228.9 384.7 L234.0 383.7 L239.2 382.6 L244.3 381.6 L249.5 380.6 L254.6 379.6 L259.8 378.7 L264.9 377.8 L270.1 376.9 L275.3 376.1 L280.4 375.2 L285.6 374.4 L290.7 373.7 L295.9 373.0 L301.0 372.4 L306.2 371.9 L311.3 371.4 L316.5 371.0 L321.6 370.7 L326.8 370.4 L331.9 370.1 L337.1 369.9 L342.2 369.7 L347.4 369.5 L352.5 369.4 L357.7 369.2 L362.8 369.1 L368.0 369.0 L368.0 615.5 L368.0 615.5 L364.2 610.4 L360.3 605.2 L356.5 599.9 L352.6 594.4 L348.8 588.5 L344.9 582.4 L341.1 576.2 L337.2 570.0 L333.4 564.0 L329.5 558.4 L325.7 553.0 L321.8 547.9 L318.0 543.0 L314.1 538.2 L310.3 533.6 L306.4 529.2 L302.6 524.8 L298.7 520.5 L294.9 516.2 L291.0 512.0 L287.2 507.9 L283.3 503.8 L279.5 499.7 L275.6 495.8 L271.8 492.0 L267.9 488.4 L264.1 485.1 L260.3 482.1 L256.4 479.3 L252.6 476.7 L248.7 474.2 L244.9 471.7 L241.0 469.3 L237.2 467.0 L233.3 464.8 L229.5 462.7 L225.6 460.7 L221.8 458.7 L217.9 456.8 L214.1 454.9 L210.2 453.1 L206.4 451.3 L202.5 449.5 L198.7 447.7 L194.8 446.0 L191.0 444.4 L187.1 442.9 L183.3 441.4 L179.4 440.0 L175.6 438.7 L171.7 437.5 L167.9 436.4 L164.1 435.4 L160.2 434.5 L156.4 433.7 L152.5 433.0 L148.7 432.4 L144.8 431.9 L141.0 431.5 L137.1 431.2 L133.3 431.0 L129.4 431.0 L125.6 431.1 L121.7 431.3 L117.9 431.6 L114.0 431.9 L110.2 432.4 L106.3 432.9 L102.5 433.4 L98.6 434.1 L94.8 434.8 L90.9 435.8 L87.1 436.8 L83.2 438.0 L79.4 439.4 L75.5 440.8 L71.7 442.3 L67.8 443.9 L64.0 445.5Z" fill="url(#gfade_l)"/>
<path d="M672.0 445.5 L666.8 443.1 L661.7 440.6 L656.5 438.2 L651.4 435.8 L646.2 433.5 L641.1 431.2 L635.9 429.0 L630.8 426.9 L625.6 424.8 L620.5 422.8 L615.3 420.8 L610.2 418.8 L605.0 416.8 L599.9 414.9 L594.7 412.9 L589.6 411.0 L584.4 409.1 L579.3 407.4 L574.1 405.7 L568.9 404.1 L563.8 402.4 L558.6 400.7 L553.5 399.0 L548.3 397.2 L543.2 395.5 L538.0 393.7 L532.9 392.1 L527.7 390.5 L522.6 389.1 L517.4 387.8 L512.3 386.5 L507.1 385.4 L502.0 384.3 L496.8 383.3 L491.7 382.3 L486.5 381.4 L481.4 380.5 L476.2 379.6 L471.1 378.7 L465.9 377.9 L460.7 377.1 L455.6 376.3 L450.4 375.6 L445.3 374.9 L440.1 374.2 L435.0 373.6 L429.8 373.0 L424.7 372.4 L419.5 372.0 L414.4 371.5 L409.2 371.1 L404.1 370.8 L398.9 370.4 L393.8 370.1 L388.6 369.9 L383.5 369.6 L378.3 369.4 L373.2 369.2 L368.0 369.0 L368.0 615.5 L368.0 615.5 L371.8 610.4 L375.7 605.2 L379.5 599.9 L383.4 594.4 L387.2 588.5 L391.1 582.4 L394.9 576.2 L398.8 570.0 L402.6 564.0 L406.5 558.4 L410.3 553.0 L414.2 547.9 L418.0 543.0 L421.9 538.2 L425.7 533.6 L429.6 529.2 L433.4 524.8 L437.3 520.5 L441.1 516.2 L445.0 512.0 L448.8 507.9 L452.7 503.8 L456.5 499.7 L460.4 495.8 L464.2 492.0 L468.1 488.4 L471.9 485.1 L475.7 482.1 L479.6 479.3 L483.4 476.7 L487.3 474.2 L491.1 471.7 L495.0 469.3 L498.8 467.0 L502.7 464.8 L506.5 462.7 L510.4 460.7 L514.2 458.7 L518.1 456.8 L521.9 454.9 L525.8 453.1 L529.6 451.3 L533.5 449.5 L537.3 447.7 L541.2 446.0 L545.0 444.4 L548.9 442.9 L552.7 441.4 L556.6 440.0 L560.4 438.7 L564.3 437.5 L568.1 436.4 L571.9 435.4 L575.8 434.5 L579.6 433.7 L583.5 433.0 L587.3 432.4 L591.2 431.9 L595.0 431.5 L598.9 431.2 L602.7 431.0 L606.6 431.0 L610.4 431.1 L614.3 431.3 L618.1 431.6 L622.0 431.9 L625.8 432.4 L629.7 432.9 L633.5 433.4 L637.4 434.1 L641.2 434.8 L645.1 435.8 L648.9 436.8 L652.8 438.0 L656.6 439.4 L660.5 440.8 L664.3 442.3 L668.2 443.9 L672.0 445.5Z" fill="url(#gfr)"/>
<path d="M672.0 445.5 L666.8 443.1 L661.7 440.6 L656.5 438.2 L651.4 435.8 L646.2 433.5 L641.1 431.2 L635.9 429.0 L630.8 426.9 L625.6 424.8 L620.5 422.8 L615.3 420.8 L610.2 418.8 L605.0 416.8 L599.9 414.9 L594.7 412.9 L589.6 411.0 L584.4 409.1 L579.3 407.4 L574.1 405.7 L568.9 404.1 L563.8 402.4 L558.6 400.7 L553.5 399.0 L548.3 397.2 L543.2 395.5 L538.0 393.7 L532.9 392.1 L527.7 390.5 L522.6 389.1 L517.4 387.8 L512.3 386.5 L507.1 385.4 L502.0 384.3 L496.8 383.3 L491.7 382.3 L486.5 381.4 L481.4 380.5 L476.2 379.6 L471.1 378.7 L465.9 377.9 L460.7 377.1 L455.6 376.3 L450.4 375.6 L445.3 374.9 L440.1 374.2 L435.0 373.6 L429.8 373.0 L424.7 372.4 L419.5 372.0 L414.4 371.5 L409.2 371.1 L404.1 370.8 L398.9 370.4 L393.8 370.1 L388.6 369.9 L383.5 369.6 L378.3 369.4 L373.2 369.2 L368.0 369.0 L368.0 615.5 L368.0 615.5 L371.8 610.4 L375.7 605.2 L379.5 599.9 L383.4 594.4 L387.2 588.5 L391.1 582.4 L394.9 576.2 L398.8 570.0 L402.6 564.0 L406.5 558.4 L410.3 553.0 L414.2 547.9 L418.0 543.0 L421.9 538.2 L425.7 533.6 L429.6 529.2 L433.4 524.8 L437.3 520.5 L441.1 516.2 L445.0 512.0 L448.8 507.9 L452.7 503.8 L456.5 499.7 L460.4 495.8 L464.2 492.0 L468.1 488.4 L471.9 485.1 L475.7 482.1 L479.6 479.3 L483.4 476.7 L487.3 474.2 L491.1 471.7 L495.0 469.3 L498.8 467.0 L502.7 464.8 L506.5 462.7 L510.4 460.7 L514.2 458.7 L518.1 456.8 L521.9 454.9 L525.8 453.1 L529.6 451.3 L533.5 449.5 L537.3 447.7 L541.2 446.0 L545.0 444.4 L548.9 442.9 L552.7 441.4 L556.6 440.0 L560.4 438.7 L564.3 437.5 L568.1 436.4 L571.9 435.4 L575.8 434.5 L579.6 433.7 L583.5 433.0 L587.3 432.4 L591.2 431.9 L595.0 431.5 L598.9 431.2 L602.7 431.0 L606.6 431.0 L610.4 431.1 L614.3 431.3 L618.1 431.6 L622.0 431.9 L625.8 432.4 L629.7 432.9 L633.5 433.4 L637.4 434.1 L641.2 434.8 L645.1 435.8 L648.9 436.8 L652.8 438.0 L656.6 439.4 L660.5 440.8 L664.3 442.3 L668.2 443.9 L672.0 445.5Z" fill="url(#gfade_r)"/>
<path d="M351.1 592.1 L368.0 582.0M334.2 565.3 L368.0 549.2M317.3 542.2 L368.0 519.0M300.4 522.4 L368.0 490.0M283.6 504.0 L368.0 461.0M266.7 487.3 L368.0 436.0M249.8 474.9 L368.0 412.0M232.9 464.6 L368.0 390.5M216.0 455.9 L368.0 369.0M199.1 447.9 L334.2 370.0M182.2 441.0 L300.4 372.4M165.3 435.7 L266.7 377.5M148.4 432.4 L232.9 383.9M131.6 431.0 L199.1 391.2M114.7 431.9 L165.3 400.9M97.8 434.2 L131.6 413.5M80.9 438.8 L97.8 428.6M80.9 420.2 L97.8 428.6M97.8 397.0 L131.6 413.5M114.7 375.3 L165.3 400.9M131.6 353.2 L199.1 391.2M148.4 337.3 L232.9 383.9M165.3 323.0 L266.7 377.5M182.2 308.9 L300.4 372.4M199.1 296.7 L334.2 370.0M216.0 286.5 L368.0 369.0M232.9 277.6 L368.0 352.5M249.8 270.1 L368.0 336.1M266.7 264.4 L368.0 322.2M283.6 261.1 L368.0 309.2M300.4 259.9 L368.0 300.3M317.3 260.5 L368.0 291.3M334.2 263.5 L368.0 283.6M351.1 268.4 L368.0 278.4M384.9 592.1 L368.0 582.0M401.8 565.3 L368.0 549.2M418.7 542.2 L368.0 519.0M435.6 522.4 L368.0 490.0M452.4 504.0 L368.0 461.0M469.3 487.3 L368.0 436.0M486.2 474.9 L368.0 412.0M503.1 464.6 L368.0 390.5M520.0 455.9 L368.0 369.0M536.9 447.9 L401.8 370.6M553.8 441.0 L435.6 373.6M570.7 435.7 L469.3 378.5M587.6 432.4 L503.1 384.5M604.4 431.0 L536.9 393.4M621.3 431.9 L570.7 404.6M638.2 434.2 L604.4 416.6M655.1 438.8 L638.2 430.0M655.1 420.2 L638.2 430.0M638.2 397.0 L604.4 416.6M621.3 375.3 L570.7 404.6M604.4 353.2 L536.9 393.4M587.6 337.3 L503.1 384.5M570.7 323.0 L469.3 378.5M553.8 308.9 L435.6 373.6M536.9 296.7 L401.8 370.6M520.0 286.5 L368.0 369.0M503.1 277.6 L368.0 352.5M486.2 270.1 L368.0 336.1M469.3 264.4 L368.0 322.2M452.4 261.1 L368.0 309.2M435.6 259.9 L368.0 300.3M418.7 260.5 L368.0 291.3M401.8 263.5 L368.0 283.6M384.9 268.4 L368.0 278.4" fill="none" stroke="#8d88cc" stroke-width="1.2" stroke-opacity="0.4" filter="url(#lb)"/>
<path d="M64.0 445.5 L67.8 439.6 L71.7 433.8 L75.5 428.1 L79.4 422.4 L83.2 416.8 L87.1 411.4 L90.9 406.1 L94.8 400.9 L98.6 395.9 L102.5 390.9 L106.3 386.1 L110.2 381.1 L114.0 376.1 L117.9 371.0 L121.7 365.7 L125.6 360.5 L129.4 355.7 L133.3 351.3 L137.1 347.4 L141.0 343.8 L144.8 340.4 L148.7 337.1 L152.5 333.9 L156.4 330.6 L160.2 327.3 L164.1 324.1 L167.9 320.8 L171.7 317.5 L175.6 314.3 L179.4 311.2 L183.3 308.1 L187.1 305.1 L191.0 302.3 L194.8 299.6 L198.7 297.0 L202.5 294.5 L206.4 292.2 L210.2 289.9 L214.1 287.6 L217.9 285.4 L221.8 283.3 L225.6 281.3 L229.5 279.3 L233.3 277.4 L237.2 275.5 L241.0 273.8 L244.9 272.1 L248.7 270.5 L252.6 269.0 L256.4 267.6 L260.3 266.3 L264.1 265.1 L267.9 264.0 L271.8 263.1 L275.6 262.3 L279.5 261.6 L283.3 261.1 L287.2 260.7 L291.0 260.3 L294.9 260.1 L298.7 259.9 L302.6 259.8 L306.4 259.9 L310.3 260.0 L314.1 260.3 L318.0 260.6 L321.8 261.1 L325.7 261.7 L329.5 262.4 L333.4 263.2 L337.2 264.2 L341.1 265.3 L344.9 266.4 L348.8 267.6 L352.6 268.8 L356.5 270.1 L360.3 271.4 L364.2 272.7 L368.0 274.0 M672.0 445.5 L668.2 439.6 L664.3 433.8 L660.5 428.1 L656.6 422.4 L652.8 416.8 L648.9 411.4 L645.1 406.1 L641.2 400.9 L637.4 395.9 L633.5 390.9 L629.7 386.1 L625.8 381.1 L622.0 376.1 L618.1 371.0 L614.3 365.7 L610.4 360.5 L606.6 355.7 L602.7 351.3 L598.9 347.4 L595.0 343.8 L591.2 340.4 L587.3 337.1 L583.5 333.9 L579.6 330.6 L575.8 327.3 L571.9 324.1 L568.1 320.8 L564.3 317.5 L560.4 314.3 L556.6 311.2 L552.7 308.1 L548.9 305.1 L545.0 302.3 L541.2 299.6 L537.3 297.0 L533.5 294.5 L529.6 292.2 L525.8 289.9 L521.9 287.6 L518.1 285.4 L514.2 283.3 L510.4 281.3 L506.5 279.3 L502.7 277.4 L498.8 275.5 L495.0 273.8 L491.1 272.1 L487.3 270.5 L483.4 269.0 L479.6 267.6 L475.7 266.3 L471.9 265.1 L468.1 264.0 L464.2 263.1 L460.4 262.3 L456.5 261.6 L452.7 261.1 L448.8 260.7 L445.0 260.3 L441.1 260.1 L437.3 259.9 L433.4 259.8 L429.6 259.9 L425.7 260.0 L421.9 260.3 L418.0 260.6 L414.2 261.1 L410.3 261.7 L406.5 262.4 L402.6 263.2 L398.8 264.2 L394.9 265.3 L391.1 266.4 L387.2 267.6 L383.4 268.8 L379.5 270.1 L375.7 271.4 L371.8 272.7 L368.0 274.0 M64.0 445.5 L67.8 443.9 L71.7 442.3 L75.5 440.8 L79.4 439.4 L83.2 438.0 L87.1 436.8 L90.9 435.8 L94.8 434.8 L98.6 434.1 L102.5 433.4 L106.3 432.9 L110.2 432.4 L114.0 431.9 L117.9 431.6 L121.7 431.3 L125.6 431.1 L129.4 431.0 L133.3 431.0 L137.1 431.2 L141.0 431.5 L144.8 431.9 L148.7 432.4 L152.5 433.0 L156.4 433.7 L160.2 434.5 L164.1 435.4 L167.9 436.4 L171.7 437.5 L175.6 438.7 L179.4 440.0 L183.3 441.4 L187.1 442.9 L191.0 444.4 L194.8 446.0 L198.7 447.7 L202.5 449.5 L206.4 451.3 L210.2 453.1 L214.1 454.9 L217.9 456.8 L221.8 458.7 L225.6 460.7 L229.5 462.7 L233.3 464.8 L237.2 467.0 L241.0 469.3 L244.9 471.7 L248.7 474.2 L252.6 476.7 L256.4 479.3 L260.3 482.1 L264.1 485.1 L267.9 488.4 L271.8 492.0 L275.6 495.8 L279.5 499.7 L283.3 503.8 L287.2 507.9 L291.0 512.0 L294.9 516.2 L298.7 520.5 L302.6 524.8 L306.4 529.2 L310.3 533.6 L314.1 538.2 L318.0 543.0 L321.8 547.9 L325.7 553.0 L329.5 558.4 L333.4 564.0 L337.2 570.0 L341.1 576.2 L344.9 582.4 L348.8 588.5 L352.6 594.4 L356.5 599.9 L360.3 605.2 L364.2 610.4 L368.0 615.5 M672.0 445.5 L668.2 443.9 L664.3 442.3 L660.5 440.8 L656.6 439.4 L652.8 438.0 L648.9 436.8 L645.1 435.8 L641.2 434.8 L637.4 434.1 L633.5 433.4 L629.7 432.9 L625.8 432.4 L622.0 431.9 L618.1 431.6 L614.3 431.3 L610.4 431.1 L606.6 431.0 L602.7 431.0 L598.9 431.2 L595.0 431.5 L591.2 431.9 L587.3 432.4 L583.5 433.0 L579.6 433.7 L575.8 434.5 L571.9 435.4 L568.1 436.4 L564.3 437.5 L560.4 438.7 L556.6 440.0 L552.7 441.4 L548.9 442.9 L545.0 444.4 L541.2 446.0 L537.3 447.7 L533.5 449.5 L529.6 451.3 L525.8 453.1 L521.9 454.9 L518.1 456.8 L514.2 458.7 L510.4 460.7 L506.5 462.7 L502.7 464.8 L498.8 467.0 L495.0 469.3 L491.1 471.7 L487.3 474.2 L483.4 476.7 L479.6 479.3 L475.7 482.1 L471.9 485.1 L468.1 488.4 L464.2 492.0 L460.4 495.8 L456.5 499.7 L452.7 503.8 L448.8 507.9 L445.0 512.0 L441.1 516.2 L437.3 520.5 L433.4 524.8 L429.6 529.2 L425.7 533.6 L421.9 538.2 L418.0 543.0 L414.2 547.9 L410.3 553.0 L406.5 558.4 L402.6 564.0 L398.8 570.0 L394.9 576.2 L391.1 582.4 L387.2 588.5 L383.4 594.4 L379.5 599.9 L375.7 605.2 L371.8 610.4 L368.0 615.5 M64.0 445.5 L69.2 442.9 L74.3 440.2 L79.5 437.6 L84.6 435.0 L89.8 432.5 L94.9 429.9 L100.1 427.5 L105.2 425.1 L110.4 422.7 L115.5 420.4 L120.7 418.1 L125.8 415.9 L131.0 413.8 L136.1 411.7 L141.3 409.6 L146.4 407.6 L151.6 405.7 L156.7 403.8 L161.9 402.0 L167.1 400.3 L172.2 398.7 L177.4 397.1 L182.5 395.6 L187.7 394.2 L192.8 392.8 L198.0 391.5 L203.1 390.3 L208.3 389.1 L213.4 388.0 L218.6 386.9 L223.7 385.8 L228.9 384.7 L234.0 383.7 L239.2 382.6 L244.3 381.6 L249.5 380.6 L254.6 379.6 L259.8 378.7 L264.9 377.8 L270.1 376.9 L275.3 376.1 L280.4 375.2 L285.6 374.4 L290.7 373.7 L295.9 373.0 L301.0 372.4 L306.2 371.9 L311.3 371.4 L316.5 371.0 L321.6 370.7 L326.8 370.4 L331.9 370.1 L337.1 369.9 L342.2 369.7 L347.4 369.5 L352.5 369.4 L357.7 369.2 L362.8 369.1 L368.0 369.0 M672.0 445.5 L666.8 443.1 L661.7 440.6 L656.5 438.2 L651.4 435.8 L646.2 433.5 L641.1 431.2 L635.9 429.0 L630.8 426.9 L625.6 424.8 L620.5 422.8 L615.3 420.8 L610.2 418.8 L605.0 416.8 L599.9 414.9 L594.7 412.9 L589.6 411.0 L584.4 409.1 L579.3 407.4 L574.1 405.7 L568.9 404.1 L563.8 402.4 L558.6 400.7 L553.5 399.0 L548.3 397.2 L543.2 395.5 L538.0 393.7 L532.9 392.1 L527.7 390.5 L522.6 389.1 L517.4 387.8 L512.3 386.5 L507.1 385.4 L502.0 384.3 L496.8 383.3 L491.7 382.3 L486.5 381.4 L481.4 380.5 L476.2 379.6 L471.1 378.7 L465.9 377.9 L460.7 377.1 L455.6 376.3 L450.4 375.6 L445.3 374.9 L440.1 374.2 L435.0 373.6 L429.8 373.0 L424.7 372.4 L419.5 372.0 L414.4 371.5 L409.2 371.1 L404.1 370.8 L398.9 370.4 L393.8 370.1 L388.6 369.9 L383.5 369.6 L378.3 369.4 L373.2 369.2 L368.0 369.0 M368 274 L368 615.5" fill="none" stroke="#b29cee" stroke-width="1.05" stroke-linejoin="round"/>
</svg>

<svg class="abs" width="80" height="70" viewBox="825 95 80 70" style="left:825px;top:95px">
<defs><filter id="cb" x="-10%" y="-10%" width="120%" height="120%"><feGaussianBlur stdDeviation="0.45"/></filter></defs>
<g filter="url(#cb)">
<ellipse cx="868.5" cy="140.2" rx="30.2" ry="17.9" fill="#838588" stroke="#a3a5a7" stroke-width="1.3"/>
<ellipse cx="868.6" cy="139.4" rx="22.8" ry="12" fill="#303030" stroke="#6a6c6e" stroke-width="1.6"/>
<path d="M868.5 106.8 L886.4 115 L885.2 134.6 L868.5 145 L851.8 134.6 L850.4 115Z" fill="#8f9193"/>
<path d="M868.5 106.8 L886.4 115 L868.5 124.8 L850.4 115Z" fill="#9c9ea0"/>
<path d="M868.5 124.8 L886.4 115 L885.2 134.6 L868.5 145Z" fill="#898b8d"/>
<path d="M855 128 v5 M857.5 129.5 v5 M860 130.5 v5 M874 133 v-5 M876.5 131.6 v-5 M879 130.2 v-5 M881.4 129 v-5" stroke="#7b7d80" stroke-width="0.9"/>
<path d="M865.6 113.6 h6 M866.4 115.4 h4.6" stroke="#828486" stroke-width="0.9"/>
</g>
</svg>

<div class="abs" id="panel">
<!-- panel coordinates: origin (919,78) -->
<svg class="abs" width="81" height="60" viewBox="919 78 81 60" style="left:0;top:0">
<!-- tabs -->
<path d="M919 78 H1000 V101 H945 V79.5 H921 V101 H919Z" fill="#3b3b3b"/>
<rect x="945.4" y="79.8" width="23.8" height="19.6" rx="1.5" fill="#444" stroke="#161616" stroke-width="1.4"/>
<rect x="970.4" y="79.8" width="23.8" height="19.6" rx="1.5" fill="#444" stroke="#161616" stroke-width="1.4"/>
<rect x="995.6" y="79.8" width="23.8" height="19.6" rx="1.5" fill="#444" stroke="#161616" stroke-width="1.4"/>
<path d="M920.6 101 V80.6 Q920.6 79 922.2 79 H943" fill="none" stroke="#2a2a2a" stroke-width="1.2"/>
<!-- create star -->
<g transform="translate(932.2 88.8)">
<circle r="5.2" fill="#f2a01e" opacity="0.35"/>
<path d="M0 -7 L1.3 -2.4 L5 -5 L2.4 -1.3 L7 0 L2.4 1.3 L5 5 L1.3 2.4 L0 7 L-1.3 2.4 L-5 5 L-2.4 1.3 L-7 0 L-2.4 -1.3 L-5 -5 L-1.3 -2.4Z" fill="#f4b52e"/>
<circle r="2.6" fill="#ffd84a"/>
</g>
<!-- modify arc -->
<rect x="950.4" y="81.8" width="14.2" height="14.4" fill="#2c3138"/>
<path d="M951.6 95.4 C951.6 88 957 83.2 964 83.2" fill="none" stroke="#7ec4ee" stroke-width="2.6"/>
<path d="M950.6 82 V96 H964.6" fill="none" stroke="#e8e8e8" stroke-width="0.9"/>
<rect x="949.6" y="80.8" width="2" height="2" fill="#f4f4f4"/><rect x="963.6" y="95" width="2.2" height="2.2" fill="#f4f4f4"/><rect x="963.6" y="82" width="1.8" height="1.8" fill="#ddd"/>
<!-- hierarchy -->
<rect x="978.6" y="81.6" width="7.6" height="7.4" fill="#dcdcdc"/>
<path d="M982.4 89 V92 M977 95 L982.4 91.4 L988 95 M982.4 91 V95" fill="none" stroke="#d8d8d8" stroke-width="1"/>
<rect x="974.6" y="93.6" width="3.8" height="3.4" fill="#e4e4e4"/><rect x="980.6" y="93.6" width="3.8" height="3.4" fill="#e4e4e4"/><rect x="986.6" y="93.6" width="3.8" height="3.4" fill="#e4e4e4"/>
<!-- geometry active -->
<rect x="927.6" y="106.6" width="19.8" height="19" fill="#0e2462"/>
<rect x="929" y="108" width="18.4" height="17.4" fill="#4a7fd6"/>
<circle cx="938.6" cy="117.2" r="6.3" fill="#e8ecf2"/>
<circle cx="937.6" cy="116" r="3.4" fill="#ffffff"/>
<!-- shapes -->
<circle cx="957.6" cy="114.6" r="4.9" fill="#cfd2d6"/>
<circle cx="956.8" cy="113.6" r="2.4" fill="#f2f2f2"/>
<rect x="958.8" y="116.4" width="7" height="7" fill="#4a4a4a" stroke="#e6e6e6" stroke-width="1.3"/>
<rect x="960" y="117.6" width="4.6" height="4.6" fill="#c9cbd0"/>
<!-- light -->
<path d="M983.4 110.4 L986 112.6 L984 117.6 L978 114.4Z" fill="#f1f1ee"/>
<ellipse cx="979.8" cy="118" rx="6.2" ry="3" transform="rotate(33 979.8 118)" fill="#dedcc0"/>
<ellipse cx="979.4" cy="118.6" rx="4.6" ry="1.7" transform="rotate(33 979.4 118.6)" fill="#f4f2dc"/>
<!-- camera -->
<rect x="995.4" y="110.8" width="6" height="6.6" rx="1" fill="#ececec"/><circle cx="997.4" cy="113.4" r="1" fill="#222"/>
<rect x="995.4" y="118.6" width="6" height="4.6" fill="#ececec"/><rect x="996" y="120.4" width="4" height="1" fill="#445"/>
</svg>
<!-- dropdown -->
<div class="abs" style="left:9.4px;top:54.6px;width:80px;height:16.6px;background:#0c0c0c;"></div>
<div class="abs" style="left:11px;top:56.4px;width:80px;height:13.6px;background:#f3f3f3;color:#101010;font-size:9.7px;line-height:13.4px;white-space:nowrap;letter-spacing:-0.28px;-webkit-text-stroke:0.15px #101010;"><span style="margin-left:1.2px">Standard Primitives</span></div>
<!-- separator -->
<div class="abs" style="left:2px;top:77px;width:90px;height:1.5px;background:#242424;"></div>
<!-- Object Type rollout -->
<div class="frame" style="top:90px;height:117px;"></div>
<div class="roll" style="top:83.4px;"><i></i><span style="position:absolute;left:42.4px;top:0.4px">Object Type</span></div>
<div class="abs" style="left:36.8px;top:99.6px;width:12.4px;height:9.8px;box-sizing:border-box;background:#535353;border-top:1.5px solid #121212;border-left:1.5px solid #121212;border-right:1px solid #5c5c5c;border-bottom:1px solid #5c5c5c;"></div>
<div class="abs" style="left:56.8px;top:98.6px;font-size:9.6px;line-height:12px;color:#050505;-webkit-text-stroke:0.15px #050505;white-space:nowrap;">AutoGrid</div>
<div class="btn" style="top:114px">Box</div>
<div class="btn" style="top:132.3px">Sphere</div>
<div class="btn" style="top:150.6px">Cylinder</div>
<div class="btn" style="top:168.9px">Torus</div>
<div class="btn" style="top:187.2px">Teapot</div>
<div class="abs" style="left:75.4px;top:114px;width:20px;height:16px;background:#474747;border-left:1px solid #4e4e4e;border-bottom:1.5px solid #161616;box-sizing:border-box;"></div>
<div class="abs" style="left:75.4px;top:132.3px;width:20px;height:16px;background:#474747;border-left:1px solid #4e4e4e;border-bottom:1.5px solid #161616;box-sizing:border-box;"></div>
<div class="abs" style="left:75.4px;top:150.6px;width:20px;height:16px;background:#474747;border-left:1px solid #4e4e4e;border-bottom:1.5px solid #161616;box-sizing:border-box;"></div>
<div class="abs" style="left:75.4px;top:168.9px;width:20px;height:16px;background:#474747;border-left:1px solid #4e4e4e;border-bottom:1.5px solid #161616;box-sizing:border-box;"></div>
<div class="abs" style="left:75.4px;top:187.2px;width:20px;height:16px;background:#474747;border-left:1px solid #4e4e4e;border-bottom:1.5px solid #161616;box-sizing:border-box;"></div>
<!-- Name and Color rollout -->
<div class="frame" style="top:220px;height:38px;"></div>
<div class="roll" style="top:213.4px;"><i></i><span style="position:absolute;left:34.4px;top:0.4px">Name and Color</span></div>
<div class="abs" style="left:13px;top:233.4px;width:80px;height:16.6px;box-sizing:border-box;background:#5b5b5b;border-top:2px solid #0c0c0c;border-left:2px solid #0c0c0c;"></div>

</div>
<div class="abs" id="panelfade"></div>
</body>
</html>
